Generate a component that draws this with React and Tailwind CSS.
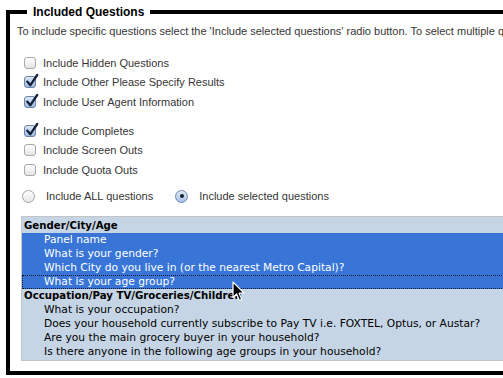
import React from 'react'

const GROUPS = [
  {
    title: 'Gender/City/Age',
    items: [
      { text: 'Panel name', selected: true },
      { text: 'What is your gender?', selected: true },
      { text: 'Which City do you live in (or the nearest Metro Capital)?', selected: true },
      { text: 'What is your age group?', selected: true, focus: true },
    ],
  },
  {
    title: 'Occupation/Pay TV/Groceries/Children',
    items: [
      { text: 'What is your occupation?' },
      { text: 'Does your household currently subscribe to Pay TV i.e. FOXTEL, Optus, or Austar?' },
      { text: 'Are you the main grocery buyer in your household?' },
      { text: 'Is there anyone in the following age groups in your household?' },
    ],
  },
]

function Check({ checked }) {
  if (!checked) {
    return <span className="block w-[12px] h-[12px] shrink-0 rounded-[3px] border border-[#a9a9a9] bg-linear-to-b from-white to-[#e4e4e4]" />
  }
  return (
    <span className="relative block w-[12px] h-[12px] shrink-0 rounded-[3px] border border-[#6d84a6] bg-linear-to-b from-[#dce8f6] to-[#9db9df]">
      <svg className="absolute top-[-4px] left-[0px]" width="14" height="15" viewBox="0 0 14 15">
        <path d="M2.2 8.6 L5.4 12.2 L12.2 2" stroke="#13223c" strokeWidth="2.3" fill="none" strokeLinecap="round" strokeLinejoin="round" />
      </svg>
    </span>
  )
}

function Radio({ on }) {
  if (!on) {
    return <span className="block w-[13px] h-[13px] shrink-0 rounded-full border border-[#a3a3a3] bg-linear-to-b from-white to-[#e6e6e6]" />
  }
  return (
    <span className="flex items-center justify-center w-[13px] h-[13px] shrink-0 rounded-full border border-[#7189aa] bg-linear-to-b from-[#dfe9f6] to-[#a6c0e3]">
      <span className="block w-[4px] h-[4px] rounded-full bg-[#15202f]" />
    </span>
  )
}

function Option({ checked, label }) {
  return (
    <div className="flex items-center h-[19.5px] pl-[7px] gap-[7px]">
      <Check checked={checked} />
      <span>{label}</span>
    </div>
  )
}

export default function App() {
  return (
    <div className="relative w-[503px] h-[378px] overflow-hidden bg-white text-[#363636]" style={{ fontFamily: '"Liberation Sans", Arial, sans-serif' }}>
      <fieldset className="mt-[4px] ml-[6px] w-[640px] border-4 border-black pl-[7px] pt-[4px] pb-[10px]">
        <legend className="ml-[10px] px-[6px] text-[12px] leading-[16px] font-bold text-black">Included Questions</legend>

        <p className="text-[11px] leading-[14px] whitespace-nowrap">
          To include specific questions select the 'Include selected questions' radio button. To select multiple questions hold down the Ctrl key.
        </p>

        <div className="mt-[15px] text-[11px]">
          <Option label="Include Hidden Questions" />
          <Option checked label="Include Other Please Specify Results" />
          <Option checked label="Include User Agent Information" />
        </div>

        <div className="mt-[9.5px] text-[11px]">
          <Option checked label="Include Completes" />
          <Option label="Include Screen Outs" />
          <Option label="Include Quota Outs" />
        </div>

        <div className="mt-[6.5px] flex items-center h-[20px] pl-[5px] text-[11px]">
          <Radio />
          <span className="ml-[11px]">Include ALL questions</span>
          <span className="ml-[22px]"><Radio on /></span>
          <span className="ml-[11px]">Include selected questions</span>
        </div>

        <div className="mt-[10px] ml-[4px] border border-[#c4c4c4] bg-[#c6d5e5] pt-[2px] pb-[1px] text-black" style={{ fontFamily: '"DejaVu Sans", Verdana, sans-serif' }}>
          {GROUPS.map(g => (
            <div key={g.title}>
              <div className="h-[14px] leading-[14px] pl-[2px] text-[10.2px] font-bold whitespace-nowrap">{g.title}</div>
              {g.items.map(it => (
                <div
                  key={it.text}
                  className={`h-[14px] leading-[12px] pl-[21px] text-[10.7px] whitespace-nowrap border border-transparent ${
                    it.selected ? 'bg-[#3875d7] text-white' : ''
                  } ${it.focus ? 'border-dotted !border-[#0b1a33]' : ''}`}
                >
                  {it.text}
                </div>
              ))}
            </div>
          ))}
        </div>
      </fieldset>

      {/* mouse pointer */}
      <svg className="absolute left-[232px] top-[281px]" width="14" height="21" viewBox="0 0 14 21">
        <path d="M1 1 L1 16.5 L4.6 13 L7.4 19.4 L9.8 18.4 L7.1 12.2 L12 12.2 Z" fill="#000" stroke="#fff" strokeWidth="1.2" strokeLinejoin="round" />
      </svg>
    </div>
  )
}
